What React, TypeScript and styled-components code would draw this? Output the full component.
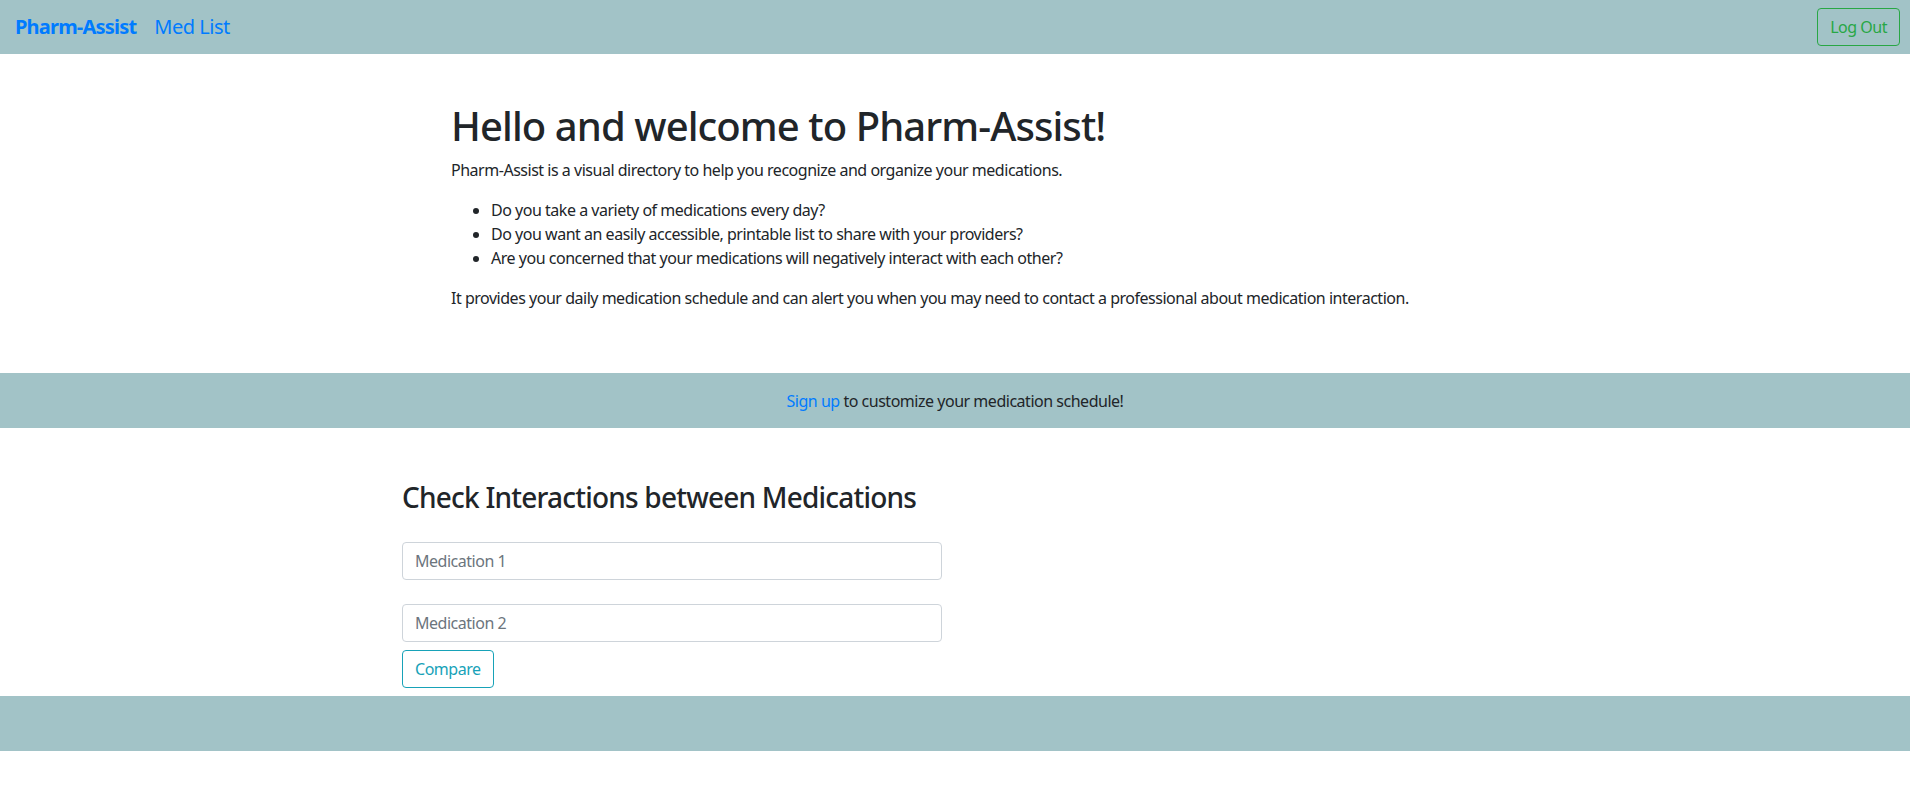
import React from 'react';
import styled, { createGlobalStyle } from 'styled-components';

const GlobalStyle = createGlobalStyle`
  body {
    margin: 0;
    background: #ffffff;
    color: #212529;
    font-family: "Noto Sans", "Open Sans", sans-serif;
    font-size: 16px;
    line-height: 24px;
    letter-spacing: -0.03em;
  }
  * { box-sizing: border-box; }
`;

const teal = '#a2c3c7';

const NavBar = styled.nav`
  height: 54px;
  background: ${teal};
  display: flex;
  align-items: center;
  padding: 0 10px 0 15px;
`;

const Brand = styled.a`
  font-size: 20px;
  font-weight: 700;
  letter-spacing: -0.04em;
  color: #007bff;
  text-decoration: none;
  margin-right: 18px;
`;

const NavLink = styled.a`
  font-size: 20px;
  color: #007bff;
  text-decoration: none;
`;

const Spacer = styled.div`
  flex: 1;
`;

const OutlineButton = styled.button<{ $tone: string }>`
  height: 38px;
  padding: 0 12px;
  font-family: inherit;
  font-size: 16px;
  letter-spacing: inherit;
  color: ${(p) => p.$tone};
  background: transparent;
  border: 1px solid ${(p) => p.$tone};
  border-radius: 4px;
  cursor: pointer;
`;

const Intro = styled.section`
  width: 1008px;
  margin: 0 auto;
  padding: 48px 0 47px;

  h1 {
    margin: 0 0 8px;
    font-size: 40px;
    line-height: 48px;
    font-weight: 500;
    letter-spacing: -0.023em;
  }

  p {
    margin: 0 0 16px;
  }

  ul {
    margin: 0 0 16px;
    padding-left: 40px;
  }
`;

const Band = styled.div<{ $height: number }>`
  height: ${(p) => p.$height}px;
  background: ${teal};
  display: flex;
  align-items: center;
  justify-content: center;
`;

const SignUp = styled.a`
  color: #007bff;
  text-decoration: none;
`;

const CheckSection = styled.section`
  width: 1106px;
  margin: 0 auto;
  padding-top: 52px;
  padding-bottom: 8px;

  h3 {
    margin: 0 0 28px;
    font-size: 28px;
    line-height: 34px;
    font-weight: 500;
    letter-spacing: -0.028em;
  }
`;

const Form = styled.form`
  width: 540px;
  display: flex;
  flex-direction: column;
  align-items: flex-start;
`;

const Input = styled.input<{ $gap: number }>`
  width: 100%;
  height: 38px;
  padding: 6px 12px;
  margin-bottom: ${(p) => p.$gap}px;
  font-family: inherit;
  font-size: 16px;
  letter-spacing: inherit;
  color: #495057;
  border: 1px solid #ced4da;
  border-radius: 4px;

  &::placeholder {
    color: #6c757d;
  }
`;

export default function App() {
  return (
    <>
      <GlobalStyle />
      <NavBar>
        <Brand href="#">Pharm-Assist</Brand>
        <NavLink href="#">Med List</NavLink>
        <Spacer />
        <OutlineButton $tone="#28a745">Log Out</OutlineButton>
      </NavBar>

      <Intro>
        <h1>Hello and welcome to Pharm-Assist!</h1>
        <p>Pharm-Assist is a visual directory to help you recognize and organize your medications.</p>
        <ul>
          <li>Do you take a variety of medications every day?</li>
          <li>Do you want an easily accessible, printable list to share with your providers?</li>
          <li>Are you concerned that your medications will negatively interact with each other?</li>
        </ul>
        <p>It provides your daily medication schedule and can alert you when you may need to contact a professional about medication interaction.</p>
      </Intro>

      <Band $height={55}>
        <span>
          <SignUp href="#">Sign up</SignUp> to customize your medication schedule!
        </span>
      </Band>

      <CheckSection>
        <h3>Check Interactions between Medications</h3>
        <Form onSubmit={(e) => e.preventDefault()}>
          <Input $gap={24} placeholder="Medication 1" />
          <Input $gap={8} placeholder="Medication 2" />
          <OutlineButton $tone="#17a2b8" type="submit">Compare</OutlineButton>
        </Form>
      </CheckSection>

      <Band $height={55} />
    </>
  );
}
